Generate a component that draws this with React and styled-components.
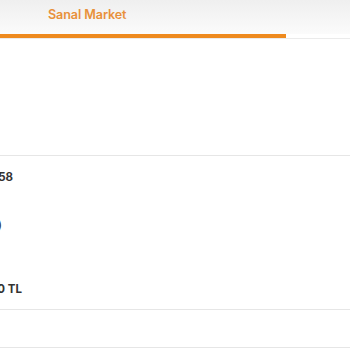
import styled, { createGlobalStyle } from "styled-components";

const Global = createGlobalStyle`
  body {
    margin: 0;
    background: #ffffff;
    font-family: Inter, "Liberation Sans", sans-serif;
    overflow: hidden;
  }
`;

const Page = styled.div`
  width: 350px;
  height: 350px;
  overflow: hidden;
  background: #fff;
`;

const Header = styled.div`
  height: 34px;
  background: linear-gradient(#efefef, #fbfbfb);
  padding-left: 48px;
  display: flex;
  align-items: center;
  box-sizing: border-box;
  padding-bottom: 6px;
`;

const Title = styled.div`
  color: #e8913b;
  font-size: 12.6px;
  font-weight: 600;
  letter-spacing: -0.1px;
`;

const Track = styled.div`
  height: 4px;
  border-bottom: 1px solid #ebebeb;
`;

const Fill = styled.div`
  height: 4px;
  background: #ee8a1e;
`;

const Divider = styled.div`
  height: 1px;
  background: #e6e6e6;
  margin-top: ${(p) => p.top}px;
`;

const Section = styled.div`
  display: flex;
  flex-direction: column;
`;

const Value = styled.div`
  margin-left: -200px;
  width: ${(p) => 200 + p.edge}px;
  text-align: right;
  white-space: nowrap;
  font-size: 11.5px;
  font-weight: ${(p) => (p.bold ? 700 : 500)};
  color: #333;
  margin-top: ${(p) => p.top}px;
  line-height: 14px;
`;

export default function App() {
  return (
    <Page>
      <Global />
      <Header>
        <Title>Sanal Market</Title>
      </Header>
      <Track>
        <Fill style={{ width: `${(286 / 350) * 100}%` }} />
      </Track>
      <Divider top={116} />
      <Section>
        <Value top={14} edge={13} bold>Ürün: 58</Value>
        <Value top={34} edge={2}>(Ücretsiz)</Value>
        <Value top={50} edge={22} bold>Toplam: 1.250,00 TL</Value>
      </Section>
      <Divider top={13} />
      <Divider top={37} />
    </Page>
  );
}
